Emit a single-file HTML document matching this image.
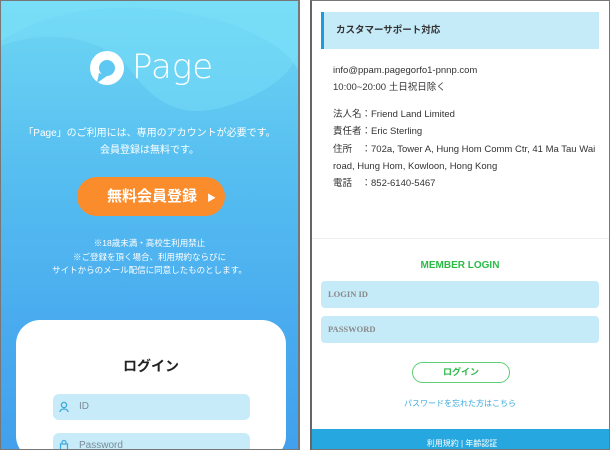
<!DOCTYPE html>
<html><head><meta charset="utf-8"><style>
*{margin:0;padding:0;box-sizing:border-box}
html,body{width:610px;height:450px;overflow:hidden}
body{background:#fff;position:relative;font-family:"Liberation Sans","Noto Sans CJK JP",sans-serif}
.l{position:absolute;left:0;top:0;width:300px;height:450px;border:1px solid #777;border-right:2px solid #777;overflow:hidden;background:linear-gradient(180deg,#6fd6f4 0%,#55bdf0 40%,#4aacef 70%,#42a0ec 100%)}
.r{position:absolute;left:310px;top:0;width:300px;height:450px;border:1px solid #777;border-left:2px solid #666;overflow:hidden;background:#fff}
.ab{position:absolute}
.t{color:#fff;text-align:center;width:100%;left:0}
</style></head><body>
<div class="l">
<svg class="ab" style="left:0;top:0" width="300" height="200"><path d="M0 40 C60 0 150 0 220 20 C270 35 300 60 300 80 L300 0 L0 0Z" fill="#7ee2f8" opacity=".6"/><path d="M0 45 C50 25 110 40 130 70 C160 110 190 120 240 100 C280 85 300 60 300 40 L300 0 L0 0Z" fill="#78def7" opacity=".5"/></svg>
<svg class="ab" style="left:86px;top:48px" width="40" height="40"><circle cx="20" cy="19" r="17" fill="#fff"/><circle cx="20" cy="19" r="8" fill="#5fc8f2"/><path d="M12 24 L10 34 L20 27Z" fill="#5fc8f2"/></svg>
<div class="ab" style="left:131px;top:46px;color:#fff;font-size:34px;font-family:'DejaVu Sans',sans-serif;font-weight:200">Page</div>
<div class="ab t" style="top:124px;font-size:10px;line-height:17px">「Page」のご利用には、専用のアカウントが必要です。<br>会員登録は無料です。</div>
<div class="ab" style="left:76px;top:176px;width:148px;height:39px;border-radius:20px;background:#fb8c2c;color:#fff;font-size:15px;font-weight:bold;line-height:39px;padding-left:30px">無料会員登録<span style="font-size:9px;margin-left:10px">▶</span></div>
<div class="ab t" style="top:236px;font-size:8.5px;line-height:13.5px">※18歳未満・高校生利用禁止<br>※ご登録を頂く場合、利用規約ならびに<br>サイトからのメール配信に同意したものとします。</div>
<div class="ab" style="left:15px;top:319px;width:270px;height:140px;background:#fff;border-radius:24px"></div>
<div class="ab" style="left:0;top:355px;width:300px;text-align:center;font-size:14px;font-weight:bold;color:#222">ログイン</div>
<div class="ab" style="left:52px;top:393px;width:197px;height:26px;background:#c7ebf8;border-radius:6px;font-size:10px;color:#7a8c99;line-height:26px;padding-left:26px">ID</div>
<svg class="ab" style="left:58px;top:400px" width="10" height="12"><circle cx="5" cy="4" r="2.6" fill="none" stroke="#3aa8dc" stroke-width="1.3"/><path d="M1 11 C1 7 9 7 9 11" fill="none" stroke="#3aa8dc" stroke-width="1.3"/></svg>
<div class="ab" style="left:52px;top:432px;width:197px;height:17px;background:#c7ebf8;border-radius:6px 6px 0 0;font-size:10px;color:#7a8c99;line-height:26px;padding-left:26px;overflow:hidden">Password</div>
<svg class="ab" style="left:58px;top:438px" width="10" height="11"><rect x="1.5" y="5" width="7" height="6" fill="none" stroke="#3aa8dc" stroke-width="1.2"/><path d="M3 5 V3.5 a2 2 0 0 1 4 0 V5" fill="none" stroke="#3aa8dc" stroke-width="1.2"/></svg>
</div>
<div class="r">
<div class="ab" style="left:9px;top:11px;width:278px;height:37px;background:#c6ebf8;border-left:3px solid #1a9de0;font-size:9.5px;font-weight:bold;color:#333;line-height:37px;padding-left:12px">カスタマーサポート対応</div>
<div class="ab" style="left:21px;top:62px;font-size:9.5px;color:#333;line-height:16.5px">info@ppam.pagegorfo1-pnnp.com<br>10:00~20:00 土日祝日除く</div>
<div class="ab" style="left:21px;top:105px;width:275px;font-size:9.5px;color:#333;line-height:17.3px">法人名：Friend Land Limited<br>責任者：Eric Sterling<br>住所　：702a, Tower A, Hung Hom Comm Ctr, 41 Ma Tau Wai road, Hung Hom, Kowloon, Hong Kong<br>電話　：852-6140-5467</div>
<div class="ab" style="left:0;top:237px;width:300px;height:1px;background:#eee"></div>
<div class="ab" style="left:0;top:259px;width:296px;text-align:center;font-size:10px;font-weight:bold;color:#2bbb47">MEMBER LOGIN</div>
<div class="ab" style="left:9px;top:280px;width:278px;height:27px;background:#c6ebf8;border-radius:4px;font-size:8.5px;font-weight:bold;color:#888;line-height:27px;padding-left:7px;font-family:'Liberation Serif',serif">LOGIN ID</div>
<div class="ab" style="left:9px;top:315px;width:278px;height:27px;background:#c6ebf8;border-radius:4px;font-size:8.5px;font-weight:bold;color:#888;line-height:27px;padding-left:7px;font-family:'Liberation Serif',serif">PASSWORD</div>
<div class="ab" style="left:100px;top:361px;width:98px;height:21px;border:1.5px solid #5fcf76;border-radius:11px;text-align:center;font-size:9px;font-weight:bold;color:#2bbb47;line-height:18px">ログイン</div>
<div class="ab" style="left:0;top:397px;width:296px;text-align:center;font-size:8px;color:#3aa8dc">パスワードを忘れた方はこちら</div>
<div class="ab" style="left:0;top:428px;width:300px;height:22px;background:#27a7df;color:#fff;font-size:8px;text-align:center;line-height:30px;overflow:hidden">利用規約 | 年齢認証</div>
</div>
</body></html>
